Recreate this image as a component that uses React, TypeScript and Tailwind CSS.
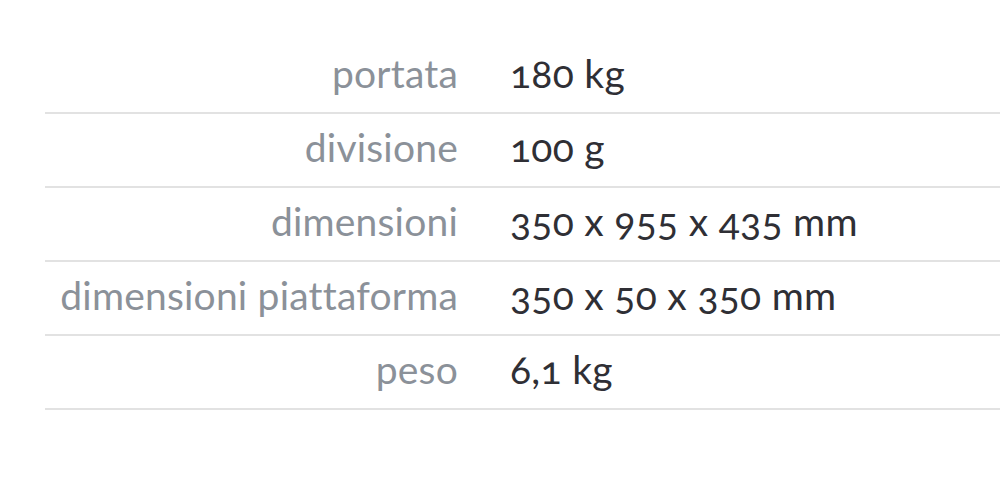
const rows: [string, string][] = [
  ["portata", "180 kg"],
  ["divisione", "100 g"],
  ["dimensioni", "350 x 955 x 435 mm"],
  ["dimensioni piattaforma", "350 x 50 x 350 mm"],
  ["peso", "6,1 kg"],
];

export default function App() {
  return (
    <main className="w-[1000px] h-[486px] bg-white pt-[39px] pl-[45px] font-['Lato','Noto_Sans',sans-serif] overflow-hidden">
      <table className="w-full border-collapse">
        <tbody>
          {rows.map(([label, value]) => (
            <tr key={label} className="h-[74px] border-b-2 border-[#e2e2e2]">
              <td className="w-[413px] pr-0 pb-[5px] text-right text-[39px] tracking-[0.2px] leading-none text-[#8b9199] [font-variant-numeric:oldstyle-nums] whitespace-nowrap">
                {label}
              </td>
              <td className="pl-[52px] pb-[5px] text-[39px] tracking-[0.3px] leading-none text-[#2f2f35] [font-variant-numeric:oldstyle-nums] whitespace-nowrap">
                {value}
              </td>
            </tr>
          ))}
        </tbody>
      </table>
    </main>
  );
}
